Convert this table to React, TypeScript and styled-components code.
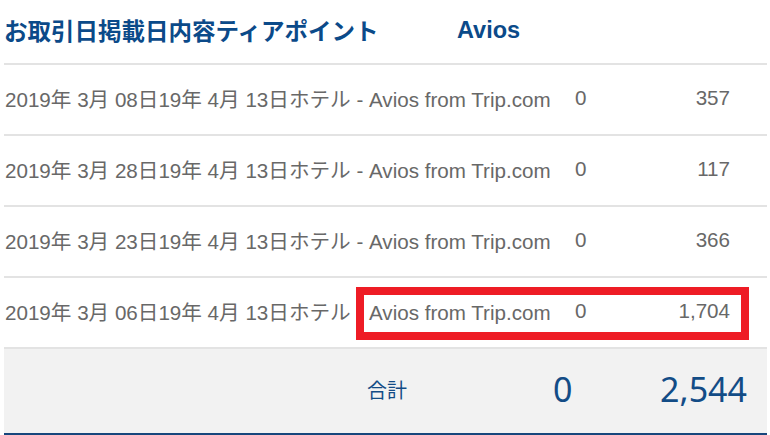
import React from "react";
import styled, { createGlobalStyle } from "styled-components";

const Global = createGlobalStyle`
  html, body { margin: 0; padding: 0; background: #ffffff; }
  body { font-family: "Liberation Sans", "Noto Sans CJK JP", sans-serif; }
`;

const Table = styled.div`
  width: 763px;
  margin-left: 4px;
  display: flex;
  flex-direction: column;
`;

const HeaderRow = styled.div`
  height: 65px;
  display: flex;
  align-items: center;
  padding-bottom: 3px;
  box-sizing: border-box;
  border-bottom: 2px solid #e3e3e3;
  font-family: "Liberation Sans", "Noto Sans CJK JP", sans-serif;
  font-weight: 700;
  font-size: 23.5px;
  color: #0b4a89;
`;

const HeadCell = styled.div<{ $width?: number }>`
  width: ${(p) => (p.$width ? `${p.$width}px` : "auto")};
  white-space: nowrap;
`;

const Row = styled.div`
  height: 71px;
  box-sizing: border-box;
  border-bottom: 2px solid #e3e3e3;
  display: flex;
  align-items: center;
  padding-bottom: 3px;
  font-family: "Liberation Sans", "Noto Sans CJK JP", sans-serif;
  font-size: 20.6px;
  color: #686868;
`;

const Desc = styled.div`
  width: 571px;
  padding-left: 1px;
  white-space: nowrap;
  box-sizing: border-box;
`;

const Tier = styled.div`
  width: 40px;
`;

const Amount = styled.div`
  flex: 1;
  text-align: right;
  padding-right: 37px;
`;

const Highlight = styled.div`
  position: absolute;
  left: 352px;
  top: 222px;
  width: 393px;
  height: 53px;
  box-sizing: border-box;
  border: 8px solid #ee1c25;
  pointer-events: none;
`;

const Body = styled.div`
  position: relative;
  display: flex;
  flex-direction: column;
`;

const TotalRow = styled.div`
  height: 86px;
  box-sizing: border-box;
  background: #f2f2f2;
  border-bottom: 2px solid #17467c;
  display: flex;
  align-items: center;
  color: #134c86;
  padding-bottom: 4px;
`;

const TotalLabel = styled.div`
  font-family: "Noto Sans CJK JP", sans-serif;
  font-size: 20px;
  padding-left: 363px;
  width: 549px;
  box-sizing: border-box;
`;

const TotalNum = styled.div<{ $grow?: boolean }>`
  font-family: "Noto Sans", "Open Sans", sans-serif;
  font-size: 34px;
  flex: ${(p) => (p.$grow ? 1 : "none")};
  text-align: ${(p) => (p.$grow ? "right" : "left")};
  padding-right: ${(p) => (p.$grow ? "20px" : "0")};
`;

const rows = [
  { d: "2019年 3月 08日19年 4月 13日ホテル - Avios from Trip.com", t: "0", a: "357" },
  { d: "2019年 3月 28日19年 4月 13日ホテル - Avios from Trip.com", t: "0", a: "117" },
  { d: "2019年 3月 23日19年 4月 13日ホテル - Avios from Trip.com", t: "0", a: "366" },
  { d: "2019年 3月 06日19年 4月 13日ホテル - Avios from Trip.com", t: "0", a: "1,704" },
];

export default function App() {
  return (
    <>
      <Global />
      <Table>
        <HeaderRow>
          <HeadCell $width={453}>お取引日掲載日内容ティアポイント</HeadCell>
          <HeadCell>Avios</HeadCell>
        </HeaderRow>
        <Body>
          {rows.map((r, i) => (
            <Row key={i}>
              <Desc>{r.d}</Desc>
              <Tier>{r.t}</Tier>
              <Amount>{r.a}</Amount>
            </Row>
          ))}
          <Highlight />
        </Body>
        <TotalRow>
          <TotalLabel>合計</TotalLabel>
          <TotalNum>0</TotalNum>
          <TotalNum $grow>2,544</TotalNum>
        </TotalRow>
      </Table>
    </>
  );
}
